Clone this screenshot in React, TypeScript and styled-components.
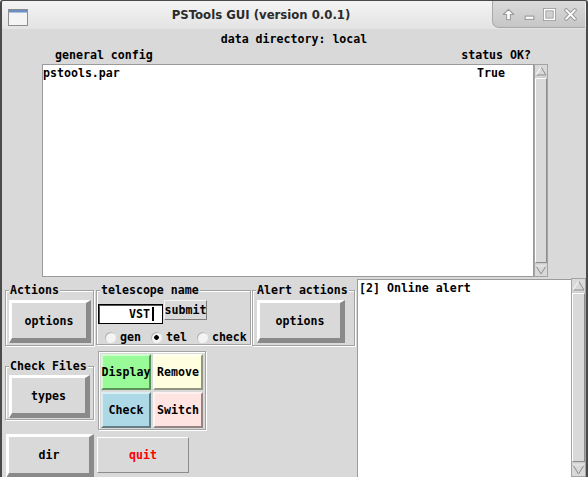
import React from "react";
import styled, { createGlobalStyle } from "styled-components";

const GlobalStyle = createGlobalStyle`
  *, *::before, *::after { box-sizing: border-box; }
  html, body { margin: 0; padding: 0; }
  body { width: 588px; height: 477px; overflow: hidden; background: #d9d9d9; }
  #root { width: 588px; height: 477px; }
`;

const mono = `"DejaVu Sans Mono", "Liberation Mono", monospace`;

const Window = styled.div`
  width: 588px;
  height: 477px;
  display: flex;
  flex-direction: column;
  overflow: hidden;
  font-family: ${mono};
  font-weight: bold;
  font-size: 11.6px;
  line-height: 14px;
  color: #000;
`;

const TitleBar = styled.header`
  height: 29px;
  flex: none;
  display: flex;
  align-items: flex-start;
  background: linear-gradient(#f4f4f4, #e3e3e3);
  border-style: solid;
  border-color: #4a4a4a;
  border-width: 1px 2px 0 2px;
  border-radius: 3px 3px 0 0;
`;

const AppIcon = styled.svg`
  flex: none;
  display: block;
  margin: 8px 0 0 6px;
`;

const Title = styled.div`
  flex: 1;
  text-align: center;
  padding-left: 2px;
  font-family: "DejaVu Sans", "Noto Sans", sans-serif;
  font-weight: bold;
  font-size: 11.7px;
  line-height: 28px;
  color: #2b2b2b;
  white-space: nowrap;
`;

const WinButtons = styled.div`
  flex: none;
  width: 93px;
  height: 27px;
  margin-right: 1px;
  display: flex;
  align-items: center;
  justify-content: space-between;
  padding: 0 8px 0 9px;
  background: linear-gradient(#dadada, #c6c6c6);
  border-left: 1px solid #a8a8a8;
  border-bottom: 1px solid #a8a8a8;
  border-bottom-left-radius: 7px;
`;

const Body = styled.main`
  flex: 1;
  min-height: 0;
  display: flex;
  flex-direction: column;
  background: #d9d9d9;
  border-left: 2px solid #4a4a4a;
  border-right: 2px solid #4a4a4a;
`;

const DirLine = styled.div`
  height: 17px;
  padding-top: 3px;
  text-align: center;
`;

const ColumnHeads = styled.div`
  height: 18px;
  padding: 2px 55px 0 53px;
  display: flex;
  justify-content: space-between;
`;

const ListRow = styled.div`
  height: 214px;
  flex: none;
  display: flex;
  padding-left: 40px;
  padding-bottom: 1px;
`;

const Listbox = styled.div`
  width: 492px;
  background: #fff;
  border: 1px solid #9b9b9b;
  padding: 1px 28px 0 0;
  display: flex;
  justify-content: space-between;
  align-items: flex-start;
`;

const Track = styled.div<{ $w: number }>`
  width: ${(p) => p.$w}px;
  flex: none;
  display: flex;
  flex-direction: column;
  background: #cdcdcd;
  border: 1px solid #a3a3a3;
`;

const Arrow = styled.svg`
  display: block;
  flex: none;
`;

const Thumb = styled.div`
  flex: 1;
  background: #d9d9d9;
  border: 1px solid;
  border-color: #fff #8c8c8c #8c8c8c #fff;
  margin: 1px 0;
`;

const BottomRow = styled.div`
  flex: 1;
  min-height: 0;
  display: flex;
`;

const Controls = styled.div`
  width: 355px;
  flex: none;
  display: grid;
  grid-template-columns: 91px 156px 104px;
  grid-template-rows: 67px 81px 1fr;
  padding: 5px 0 0 3px;
  align-items: start;
  justify-items: start;
`;

const Group = styled.div<{ $w: number; $top?: number; $pad: string }>`
  position: relative;
  width: ${(p) => p.$w}px;
  margin-top: ${(p) => p.$top ?? 7}px;
  padding: ${(p) => p.$pad};
  border: 1px solid #a3a3a3;
  box-shadow: inset 1px 1px 0 #fff, 1px 1px 0 #fff;
`;

const Legend = styled.span`
  position: absolute;
  top: -8px;
  left: 3px;
  padding: 0 1px;
  background: #d9d9d9;
  line-height: 14px;
  white-space: nowrap;
`;

const BigButton = styled.button<{ $w: number; $h: number }>`
  width: ${(p) => p.$w}px;
  height: ${(p) => p.$h}px;
  margin: 0;
  padding: 0;
  font: inherit;
  color: #000;
  background: #d9d9d9;
  border-style: solid;
  border-width: 3px 5px 5px 3px;
  border-color: #fff #8a8a8a #8a8a8a #fff;
  display: flex;
  align-items: center;
  justify-content: center;
`;

const EntryRow = styled.div`
  display: flex;
  align-items: flex-start;
`;

const Entry = styled.div`
  width: 65px;
  height: 20px;
  margin-top: 4px;
  background: #fff;
  border: 1px solid #000;
  box-shadow: inset 1px 1px 0 #555;
  display: flex;
  align-items: center;
  justify-content: flex-end;
  padding-right: 8px;
`;

const Caret = styled.span`
  width: 2px;
  height: 14px;
  margin-left: 2px;
  background: #000;
`;

const SmallButton = styled.button`
  width: 43px;
  height: 20px;
  margin: 0 0 0 1px;
  padding: 0;
  font: inherit;
  color: #000;
  background: #d9d9d9;
  border: 1px solid;
  border-color: #f6f6f6 #7e7e7e #7e7e7e #f6f6f6;
  white-space: nowrap;
  display: flex;
  align-items: center;
  justify-content: center;
`;

const RadioRow = styled.div`
  display: flex;
  align-items: center;
  margin-top: 6px;
  padding-left: 7px;
  height: 14px;
`;

const RadioItem = styled.label`
  display: flex;
  align-items: center;
  gap: 4px;
  & + & {
    margin-left: 10px;
  }
`;

const RadioDot = styled.span<{ $on?: boolean }>`
  width: 11px;
  height: 11px;
  border-radius: 50%;
  background: ${(p) =>
    p.$on
      ? "radial-gradient(circle, #000 0 2px, #f4f4f4 2.6px)"
      : "#f4f4f4"};
  box-shadow: inset 1px 1px 0 #b5b5b5;
`;

const ColorFrame = styled.div`
  margin: 1px 0 0 2px;
  padding: 2px 2px 1px 2px;
  display: grid;
  grid-template-columns: 50px 50px;
  grid-auto-rows: 36px;
  gap: 2px;
  border: 1px solid #a3a3a3;
  box-shadow: inset 1px 1px 0 #fff, 1px 1px 0 #fff;
`;

const ColorButton = styled.button<{ $bg: string }>`
  margin: 0;
  padding: 0;
  font: inherit;
  color: #000;
  background: ${(p) => p.$bg};
  border: 2px solid;
  border-color: rgba(255, 255, 255, 0.55) rgba(0, 0, 0, 0.42)
    rgba(0, 0, 0, 0.42) rgba(255, 255, 255, 0.55);
  white-space: nowrap;
  display: flex;
  align-items: center;
  justify-content: center;
  overflow: visible;
`;

const DirSlot = styled.div`
  margin: 3px 0 0 1px;
`;

const QuitButton = styled.button`
  width: 92px;
  height: 36px;
  margin: 6px 0 0 1px;
  padding: 0;
  font: inherit;
  color: #ff0000;
  background: #d9d9d9;
  border: 1px solid;
  border-color: #fff #8c8c8c #8c8c8c #fff;
`;

const TextPane = styled.div`
  flex: 1;
  margin-top: 1px;
  background: #fff;
  border-left: 1px solid #9b9b9b;
  border-top: 1px solid #9b9b9b;
  padding: 1px 0 0 1px;
`;

function ScrollArrow({ w, dir }: { w: number; dir: "up" | "down" }) {
  const s = w - 2;
  const top = 2;
  const bot = s - 2;
  const mid = s / 2;
  const pts =
    dir === "up"
      ? `${mid},${top} ${1},${bot} ${s - 1},${bot}`
      : `${1},${top} ${s - 1},${top} ${mid},${bot}`;
  return (
    <Arrow width={s} height={s} viewBox={`0 0 ${s} ${s}`}>
      <rect x="0" y="0" width={s} height={s} fill="#d9d9d9" />
      <polygon points={pts} fill="#d9d9d9" stroke="#8c8c8c" strokeWidth="1" />
      {dir === "up" ? (
        <line x1={mid} y1={top} x2={1} y2={bot} stroke="#fff" strokeWidth="1.2" />
      ) : (
        <line x1={1} y1={top} x2={s - 1} y2={top} stroke="#fff" strokeWidth="1.2" />
      )}
    </Arrow>
  );
}

function Scrollbar({ w }: { w: number }) {
  return (
    <Track $w={w}>
      <ScrollArrow w={w} dir="up" />
      <Thumb />
      <ScrollArrow w={w} dir="down" />
    </Track>
  );
}

function WinIcons() {
  const outline = "#9a9a9a";
  return (
    <WinButtons>
      <svg width="13" height="13" viewBox="0 0 12 12">
        <path d="M6 1.2 L10.8 6 H7.7 V10.8 H4.3 V6 H1.2 Z" fill="#fff" stroke={outline} strokeWidth="1" strokeLinejoin="round" />
      </svg>
      <svg width="13" height="13" viewBox="0 0 12 12">
        <rect x="2" y="7.5" width="8" height="3" fill="#fff" stroke={outline} strokeWidth="1" />
      </svg>
      <svg width="13" height="13" viewBox="0 0 12 12">
        <rect x="1.5" y="1.5" width="9" height="9" fill="none" stroke={outline} strokeWidth="3" />
        <rect x="1.5" y="1.5" width="9" height="9" fill="none" stroke="#fff" strokeWidth="1.4" />
      </svg>
      <svg width="13" height="13" viewBox="0 0 12 12">
        <path d="M2 2 L10 10 M10 2 L2 10" stroke={outline} strokeWidth="3.6" strokeLinecap="round" />
        <path d="M2 2 L10 10 M10 2 L2 10" stroke="#fff" strokeWidth="1.8" strokeLinecap="round" />
      </svg>
    </WinButtons>
  );
}

export default function App() {
  return (
    <>
      <GlobalStyle />
      <Window>
        <TitleBar>
          <AppIcon width="20" height="17" viewBox="0 0 20 17">
            <rect x="0.5" y="0.5" width="19" height="16" fill="#f4f4f4" stroke="#8d8d8d" />
            <rect x="1" y="1" width="18" height="2.5" fill="#6b8ec6" />
          </AppIcon>
          <Title>PSTools GUI (version 0.0.1)</Title>
          <WinIcons />
        </TitleBar>
        <Body>
          <DirLine>data directory: local</DirLine>
          <ColumnHeads>
            <span>general config</span>
            <span>status OK?</span>
          </ColumnHeads>
          <ListRow>
            <Listbox>
              <span>pstools.par</span>
              <span>True</span>
            </Listbox>
            <Scrollbar w={14} />
          </ListRow>
          <BottomRow>
            <Controls>
              <Group $w={89} $pad="9px 2px 2px 3px">
                <Legend>Actions</Legend>
                <BigButton $w={82} $h={43}>options</BigButton>
              </Group>
              <Group $w={155} $pad="9px 0 0 1px">
                <Legend>telescope name</Legend>
                <EntryRow>
                  <Entry>
                    VST
                    <Caret />
                  </Entry>
                  <SmallButton>submit</SmallButton>
                </EntryRow>
                <RadioRow>
                  <RadioItem>
                    <RadioDot />
                    gen
                  </RadioItem>
                  <RadioItem>
                    <RadioDot $on />
                    tel
                  </RadioItem>
                  <RadioItem>
                    <RadioDot />
                    check
                  </RadioItem>
                </RadioRow>
              </Group>
              <Group $w={103} $pad="9px 0 2px 4px">
                <Legend>Alert actions</Legend>
                <BigButton $w={88} $h={43}>options</BigButton>
              </Group>

              <Group $w={89} $top={16} $pad="8px 2px 1px 3px">
                <Legend>Check Files</Legend>
                <BigButton $w={81} $h={43}>types</BigButton>
              </Group>
              <ColorFrame>
                <ColorButton $bg="#98fb98">Display</ColorButton>
                <ColorButton $bg="#ffffe0">Remove</ColorButton>
                <ColorButton $bg="#add8e6">Check</ColorButton>
                <ColorButton $bg="#ffe4e1">Switch</ColorButton>
              </ColorFrame>
              <div />

              <DirSlot>
                <BigButton $w={88} $h={44}>dir</BigButton>
              </DirSlot>
              <QuitButton>quit</QuitButton>
            </Controls>
            <TextPane>[2] Online alert</TextPane>
            <Scrollbar w={15} />
          </BottomRow>
        </Body>
      </Window>
    </>
  );
}
